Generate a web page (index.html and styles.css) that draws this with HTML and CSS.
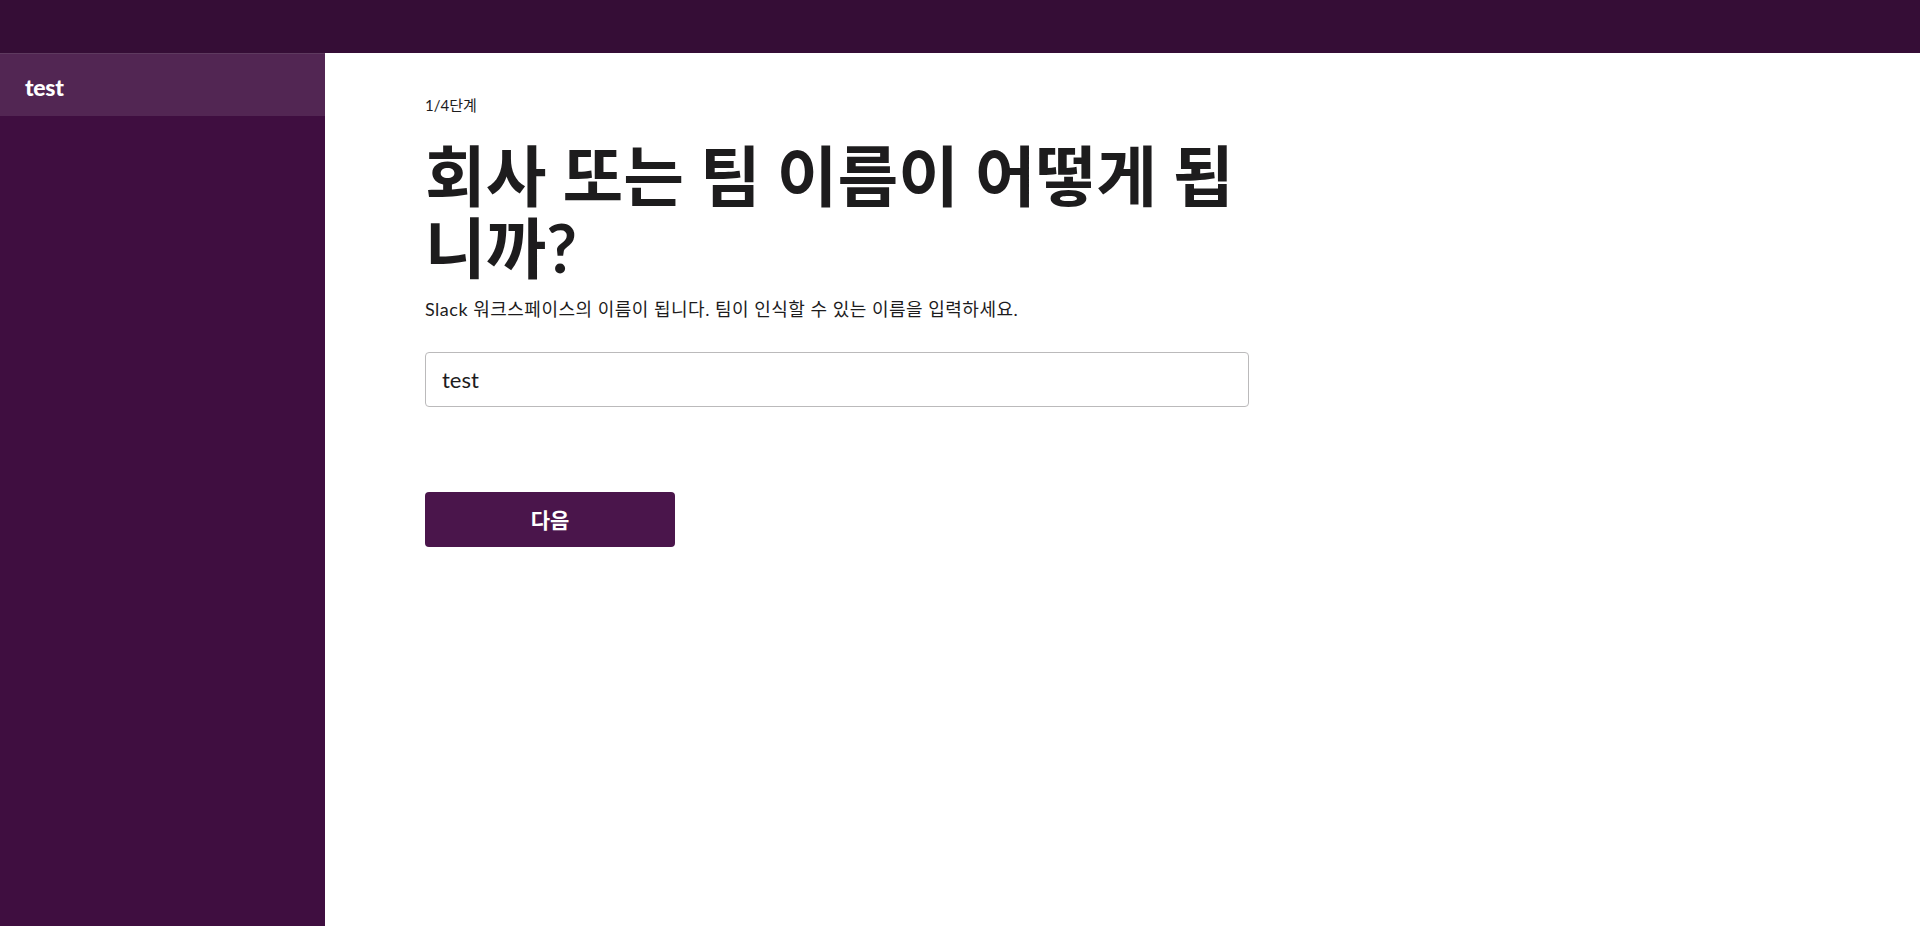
FILE: index.html
```html
<!DOCTYPE html>
<html lang="ko">
<head>
<meta charset="utf-8">
<title>Slack</title>
<link rel="stylesheet" href="styles.css">
</head>
<body>
<header class="topbar"></header>
<div class="layout">
  <aside class="sidebar">
    <div class="team-item">test</div>
  </aside>
  <main class="main">
    <div class="step">1/4단계</div>
    <h1 class="title">회사 또는 팀 이름이 어떻게 됩니까?</h1>
    <p class="sub">Slack 워크스페이스의 이름이 됩니다. 팀이 인식할 수 있는 이름을 입력하세요.</p>
    <input class="name-input" type="text" value="test">
    <button class="next-btn" type="button">다음</button>
  </main>
</div>
</body>
</html>
```
FILE: styles.css
```css
html, body {
  margin: 0;
  padding: 0;
  height: 100%;
}
body {
  font-family: Lato, "Noto Sans CJK KR", sans-serif;
  color: #1d1c1d;
  background: #ffffff;
  display: flex;
  flex-direction: column;
  overflow: hidden;
}
.topbar {
  height: 53px;
  background: #350d36;
  flex: none;
}
.layout {
  flex: 1;
  display: flex;
}
.sidebar {
  width: 325px;
  flex: none;
  background: #3f0e40;
}
.team-item {
  box-sizing: border-box;
  height: 63px;
  border-top: 1px solid #5e3a5f;
  background: #522653;
  color: #ffffff;
  font-weight: 900;
  font-size: 23px;
  letter-spacing: -0.3px;
  display: flex;
  align-items: center;
  padding-left: 25px;
  padding-top: 3px;
}
.main {
  flex: 1;
  padding: 42px 0 0 100px;
  display: flex;
  flex-direction: column;
  align-items: flex-start;
}
.step {
  font-size: 15px;
  line-height: 20px;
}
.title {
  margin: 25px 0 0;
  width: 824px;
  font-size: 66px;
  line-height: 72px;
  font-weight: 700;
  letter-spacing: 0;
}
.sub {
  margin: 13px 0 0;
  font-size: 18px;
  line-height: 24px;
  letter-spacing: 0.5px;
}
.name-input {
  margin-top: 31px;
  box-sizing: border-box;
  width: 824px;
  height: 55px;
  border: 1px solid #bbbabb;
  border-radius: 4px;
  padding: 0 16px;
  font-family: Lato, "Noto Sans CJK KR", sans-serif;
  font-size: 22px;
  color: #1d1c1d;
  outline: none;
}
.next-btn {
  margin-top: 85px;
  width: 250px;
  height: 55px;
  border: none;
  border-radius: 4px;
  background: #4a154b;
  color: #ffffff;
  font-family: Lato, "Noto Sans CJK KR", sans-serif;
  font-weight: 700;
  font-size: 21px;
  padding: 0 0 2px;
  cursor: pointer;
}
```
